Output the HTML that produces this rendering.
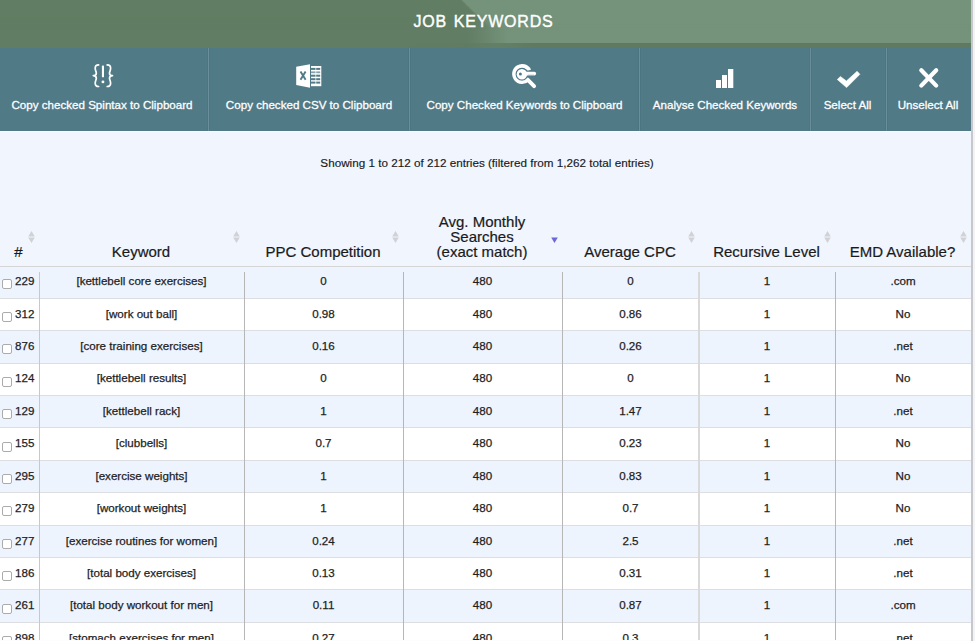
<!DOCTYPE html><html><head><meta charset='utf-8'><style>
*{margin:0;padding:0;box-sizing:border-box}
html,body{width:975px;height:641px;overflow:hidden;background:#f0f5fe;font-family:"Liberation Sans",sans-serif}
.abs{position:absolute}
#hdr{position:absolute;left:0;top:0;width:971px;height:48px;
 background:linear-gradient(90deg,#617d63 467px,#74937a 508px);}
#hdr2{position:absolute;left:0;top:0;width:971px;height:48px;
 background:linear-gradient(45deg,#617d63 49.85%,#74937a 50.15%);
 -webkit-mask-image:linear-gradient(to bottom,#000 0px,#000 13px,transparent 30px);}
#band{position:absolute;left:0;top:43px;width:971px;height:5px;background:linear-gradient(90deg,rgba(95,122,97,0) 0%,rgba(95,122,97,0) 40%,#5f7a61 55%,#5f7a61 100%)}
#title{position:absolute;left:-2px;width:971px;top:11.6px;text-align:center;color:#fff;font-size:16px;-webkit-text-stroke:0.4px #fff;letter-spacing:0.78px;word-spacing:1.6px;line-height:20px;white-space:nowrap}
#tb{position:absolute;left:0;top:48px;width:971px;height:83px;background:#517a87}
.sep{position:absolute;top:48px;height:83px;width:1px;background:#6a8f9a;box-shadow:-1px 0 0 #4c7582,1px 0 0 #4c7582}
.bt{position:absolute;top:97px;height:16px;line-height:16px;color:#fff;-webkit-text-stroke:0.28px #fff;font-size:11.6px;text-align:center;white-space:nowrap}
.ic{position:absolute;top:48px}
#right{position:absolute;left:971px;top:0;width:4px;height:641px;background:#f3f3f3;border-left:2px solid #c6c8cd}
#topline{position:absolute;left:0;top:131px;width:971px;height:1px;background:#fafcff}
#show{position:absolute;left:1.5px;width:971px;top:155px;text-align:center;font-size:11.7px;line-height:16px;color:#1a1a1a;-webkit-text-stroke:0.15px #1a1a1a}
.th{position:absolute;color:#1a1a1a;-webkit-text-stroke:0.2px #1a1a1a;font-size:15px;line-height:15px;text-align:center;white-space:nowrap}
.arr{position:absolute;top:231px;width:7px;height:12px}
#hline{position:absolute;left:0;top:266px;width:971px;height:1px;background:#d6d6d6}
.row{position:absolute;left:0;width:971px}
.rl{position:absolute;left:0;width:971px;height:1px;background:#dcdee2}
.vl{position:absolute;top:272px;width:1px;height:369px;background:#b6b6b6}
.td{position:absolute;font-size:11.6px;line-height:14px;color:#1e1e1e;-webkit-text-stroke:0.25px #1e1e1e;text-align:center;white-space:nowrap}
.cb{position:absolute;left:2px;width:10px;height:10px;border:1px solid #ababab;border-radius:2px;background:#fff}
</style></head><body>
<div id='hdr'></div><div id='hdr2'></div><div id='band'></div><div id='title'>JOB KEYWORDS</div>
<div id='tb'></div>
<div class='sep' style='left:208px'></div>
<div class='sep' style='left:409px'></div>
<div class='sep' style='left:639px'></div>
<div class='sep' style='left:810px'></div>
<div class='sep' style='left:886px'></div>
<div class='bt' style='left:-2px;width:208px'>Copy checked Spintax to Clipboard</div>
<div class='bt' style='left:209px;width:200px'>Copy checked CSV to Clipboard</div>
<div class='bt' style='left:410px;width:229px'>Copy Checked Keywords to Clipboard</div>
<div class='bt' style='left:640px;width:170px'>Analyse Checked Keywords</div>
<div class='bt' style='left:810px;width:75px'>Select All</div>
<div class='bt' style='left:886px;width:84px'>Unselect All</div>
<svg class='abs' style='left:0;top:0' width='975' height='135' viewBox='0 0 975 135'>
<g fill='none' stroke='#fff' stroke-width='1.7' stroke-linecap='round' stroke-linejoin='round'>
<path d='M98.6,64.9 C96.2,64.9 95.2,66 95.2,68.2 C95.2,70.4 96.3,71.6 96.3,73.2 C96.3,74.8 95.2,75.6 93.3,75.7 C95.2,75.8 96.3,76.6 96.3,78.2 C96.3,79.8 95.2,81 95.2,83.2 C95.2,85.4 96.2,86.5 98.6,86.5'/>
<path d='M107.2,64.9 C109.6,64.9 110.6,66 110.6,68.2 C110.6,70.4 109.5,71.6 109.5,73.2 C109.5,74.8 110.6,75.6 112.5,75.7 C110.6,75.8 109.5,76.6 109.5,78.2 C109.5,79.8 110.6,81 110.6,83.2 C110.6,85.4 109.6,86.5 107.2,86.5'/>
</g>
<g fill='#fff'>
<rect x='101.9' y='65.6' width='2.1' height='11.7' rx='0.6'/>
<circle cx='102.95' cy='81.9' r='1.45'/>
</g>
<g>
<path fill='#fff' d='M296.2,66.7 L310,64.2 L310,87.7 L296.2,85 Z'/>
<path d='M300.5,71.6 L305.6,79.8 M305.6,71.6 L300.5,79.8' stroke='#517a87' stroke-width='1.9' stroke-linecap='butt'/>
<rect x='311' y='66' width='10.3' height='20.2' fill='#fff'/>
<g fill='#517a87'>
<rect x='311' y='67.9' width='4.5' height='2'/><rect x='316.2' y='67.9' width='4' height='2'/>
<rect x='311' y='71.4' width='4.5' height='1.8' opacity='0.7'/><rect x='316.2' y='71.4' width='4' height='1.8' opacity='0.7'/>
<rect x='311' y='74.7' width='4.5' height='2'/><rect x='316.2' y='74.7' width='4' height='2'/>
<rect x='311' y='78.2' width='4.5' height='2'/><rect x='316.2' y='78.2' width='4' height='2'/>
<rect x='311' y='81.6' width='4.5' height='2'/><rect x='316.2' y='81.6' width='4' height='2'/>
</g>
<rect x='310' y='64' width='1' height='24' fill='#517a87'/>
</g>
<g>
<path d='M529.4,70.3 A8.15,8.15 0 1 0 527.8,79.8' fill='none' stroke='#fff' stroke-width='3.7'/>
<path d='M527.6,79.6 L534.1,86.1' stroke='#fff' stroke-width='3.9' stroke-linecap='round'/>
<g fill='#517a87' stroke='#517a87' stroke-width='2.2' stroke-linejoin='round'>
<circle cx='521.9' cy='74.2' r='5.2'/>
<path d='M525,71.7 L534.3,71.7 Q536.1,71.7 536.1,73.55 Q536.1,75.4 534.3,75.4 L525,75.4 Z'/>
</g>
<g fill='#fff'>
<circle cx='521.9' cy='74.2' r='5.2'/>
<path d='M525,71.7 L534.3,71.7 Q536.1,71.7 536.1,73.55 Q536.1,75.4 534.3,75.4 L525,75.4 Z'/>
</g>
<circle cx='520.4' cy='73.9' r='1.5' fill='#517a87'/>
<g fill='#517a87'><rect x='528.6' y='74.6' width='0.8' height='0.9'/><rect x='530.6' y='74.6' width='0.8' height='0.9'/><rect x='532.6' y='74.6' width='0.8' height='0.9'/></g>
</g>
<g fill='#fff'>
<rect x='716' y='80' width='5' height='8'/>
<rect x='722' y='75' width='5' height='13'/>
<rect x='728' y='69' width='5.3' height='19'/>
</g>
<path fill='#fff' stroke='#fff' stroke-width='0.6' stroke-linejoin='round' d='M837.3,79.5 L840.4,76.5 L846.4,81 L857.1,71.3 L859.9,74.3 L846.6,87.6 Z'/>
<g stroke='#fff' stroke-width='4.2' stroke-linecap='round'>
<path d='M921.3,70.3 L936.2,85.6'/><path d='M936.2,70.3 L921.3,85.6'/>
</g>
</svg>
<div id='topline'></div>
<div id='show'>Showing 1 to 212 of 212 entries (filtered from 1,262 total entries)</div>
<div class='th' style='left:-1px;width:39px;top:243.5px'>#</div>
<svg class='arr' style='left:27.6px' viewBox='0 0 7 12'><path d='M3.5,0 L6.8,5.5 L0.2,5.5 Z M0.2,6.5 L6.8,6.5 L3.5,12 Z' fill='#d0d2d6'/></svg>
<div class='th' style='left:39px;width:204px;top:243.5px'>Keyword</div>
<svg class='arr' style='left:232.6px' viewBox='0 0 7 12'><path d='M3.5,0 L6.8,5.5 L0.2,5.5 Z M0.2,6.5 L6.8,6.5 L3.5,12 Z' fill='#d0d2d6'/></svg>
<div class='th' style='left:244px;width:158px;top:243.5px'>PPC Competition</div>
<svg class='arr' style='left:391.6px' viewBox='0 0 7 12'><path d='M3.5,0 L6.8,5.5 L0.2,5.5 Z M0.2,6.5 L6.8,6.5 L3.5,12 Z' fill='#d0d2d6'/></svg>
<div class='th' style='left:403px;width:158px;top:213.5px'>Avg. Monthly<br>Searches<br>(exact match)</div>
<svg class='arr' style='left:550.6px' viewBox='0 0 7 12'><path d='M0.2,6.5 L6.8,6.5 L3.5,12 Z' fill='#6b67d6'/></svg>
<div class='th' style='left:562px;width:136px;top:243.5px'>Average CPC</div>
<svg class='arr' style='left:687.6px' viewBox='0 0 7 12'><path d='M3.5,0 L6.8,5.5 L0.2,5.5 Z M0.2,6.5 L6.8,6.5 L3.5,12 Z' fill='#d0d2d6'/></svg>
<div class='th' style='left:699px;width:135px;top:243.5px'>Recursive Level</div>
<svg class='arr' style='left:823.6px' viewBox='0 0 7 12'><path d='M3.5,0 L6.8,5.5 L0.2,5.5 Z M0.2,6.5 L6.8,6.5 L3.5,12 Z' fill='#d0d2d6'/></svg>
<div class='th' style='left:835px;width:135px;top:243.5px'>EMD Available?</div>
<svg class='arr' style='left:959.6px' viewBox='0 0 7 12'><path d='M3.5,0 L6.8,5.5 L0.2,5.5 Z M0.2,6.5 L6.8,6.5 L3.5,12 Z' fill='#d0d2d6'/></svg>
<div id='hline'></div>
<div class='row' style='top:267px;height:31px;background:#eef4fe'></div>
<div class='rl' style='top:298px'></div>
<div class='row' style='top:299px;height:31px;background:#ffffff'></div>
<div class='rl' style='top:330px'></div>
<div class='row' style='top:331px;height:32px;background:#eef4fe'></div>
<div class='rl' style='top:363px'></div>
<div class='row' style='top:364px;height:31px;background:#ffffff'></div>
<div class='rl' style='top:395px'></div>
<div class='row' style='top:396px;height:31px;background:#eef4fe'></div>
<div class='rl' style='top:427px'></div>
<div class='row' style='top:428px;height:32px;background:#ffffff'></div>
<div class='rl' style='top:460px'></div>
<div class='row' style='top:461px;height:31px;background:#eef4fe'></div>
<div class='rl' style='top:492px'></div>
<div class='row' style='top:493px;height:32px;background:#ffffff'></div>
<div class='rl' style='top:525px'></div>
<div class='row' style='top:526px;height:31px;background:#eef4fe'></div>
<div class='rl' style='top:557px'></div>
<div class='row' style='top:558px;height:31px;background:#ffffff'></div>
<div class='rl' style='top:589px'></div>
<div class='row' style='top:590px;height:32px;background:#eef4fe'></div>
<div class='rl' style='top:622px'></div>
<div class='row' style='top:623px;height:31px;background:#ffffff'></div>
<div class='rl' style='top:654px'></div>
<div class='vl' style='left:39px;background:#c8c8c8'></div>
<div class='vl' style='left:244px'></div>
<div class='vl' style='left:403px'></div>
<div class='vl' style='left:562px'></div>
<div class='vl' style='left:698px;width:2px;background:#d9d9d9'></div>
<div class='vl' style='left:835px'></div>
<div class='cb' style='top:279.4px'></div>
<div class='td' style='left:15px;top:274.21px;text-align:left'>229</div>
<div class='td' style='left:40px;width:203px;top:274.21px'>[kettlebell core exercises]</div>
<div class='td' style='left:245px;width:157px;top:274.21px'>0</div>
<div class='td' style='left:404px;width:157px;top:274.21px'>480</div>
<div class='td' style='left:563px;width:135px;top:274.21px'>0</div>
<div class='td' style='left:700px;width:134px;top:274.21px'>1</div>
<div class='td' style='left:836px;width:134px;top:274.21px'>.com</div>
<div class='cb' style='top:311.8px'></div>
<div class='td' style='left:15px;top:306.63px;text-align:left'>312</div>
<div class='td' style='left:40px;width:203px;top:306.63px'>[work out ball]</div>
<div class='td' style='left:245px;width:157px;top:306.63px'>0.98</div>
<div class='td' style='left:404px;width:157px;top:306.63px'>480</div>
<div class='td' style='left:563px;width:135px;top:306.63px'>0.86</div>
<div class='td' style='left:700px;width:134px;top:306.63px'>1</div>
<div class='td' style='left:836px;width:134px;top:306.63px'>No</div>
<div class='cb' style='top:344.2px'></div>
<div class='td' style='left:15px;top:339.05px;text-align:left'>876</div>
<div class='td' style='left:40px;width:203px;top:339.05px'>[core training exercises]</div>
<div class='td' style='left:245px;width:157px;top:339.05px'>0.16</div>
<div class='td' style='left:404px;width:157px;top:339.05px'>480</div>
<div class='td' style='left:563px;width:135px;top:339.05px'>0.26</div>
<div class='td' style='left:700px;width:134px;top:339.05px'>1</div>
<div class='td' style='left:836px;width:134px;top:339.05px'>.net</div>
<div class='cb' style='top:376.7px'></div>
<div class='td' style='left:15px;top:371.47px;text-align:left'>124</div>
<div class='td' style='left:40px;width:203px;top:371.47px'>[kettlebell results]</div>
<div class='td' style='left:245px;width:157px;top:371.47px'>0</div>
<div class='td' style='left:404px;width:157px;top:371.47px'>480</div>
<div class='td' style='left:563px;width:135px;top:371.47px'>0</div>
<div class='td' style='left:700px;width:134px;top:371.47px'>1</div>
<div class='td' style='left:836px;width:134px;top:371.47px'>No</div>
<div class='cb' style='top:409.1px'></div>
<div class='td' style='left:15px;top:403.89px;text-align:left'>129</div>
<div class='td' style='left:40px;width:203px;top:403.89px'>[kettlebell rack]</div>
<div class='td' style='left:245px;width:157px;top:403.89px'>1</div>
<div class='td' style='left:404px;width:157px;top:403.89px'>480</div>
<div class='td' style='left:563px;width:135px;top:403.89px'>1.47</div>
<div class='td' style='left:700px;width:134px;top:403.89px'>1</div>
<div class='td' style='left:836px;width:134px;top:403.89px'>.net</div>
<div class='cb' style='top:441.5px'></div>
<div class='td' style='left:15px;top:436.31px;text-align:left'>155</div>
<div class='td' style='left:40px;width:203px;top:436.31px'>[clubbells]</div>
<div class='td' style='left:245px;width:157px;top:436.31px'>0.7</div>
<div class='td' style='left:404px;width:157px;top:436.31px'>480</div>
<div class='td' style='left:563px;width:135px;top:436.31px'>0.23</div>
<div class='td' style='left:700px;width:134px;top:436.31px'>1</div>
<div class='td' style='left:836px;width:134px;top:436.31px'>No</div>
<div class='cb' style='top:473.9px'></div>
<div class='td' style='left:15px;top:468.73px;text-align:left'>295</div>
<div class='td' style='left:40px;width:203px;top:468.73px'>[exercise weights]</div>
<div class='td' style='left:245px;width:157px;top:468.73px'>1</div>
<div class='td' style='left:404px;width:157px;top:468.73px'>480</div>
<div class='td' style='left:563px;width:135px;top:468.73px'>0.83</div>
<div class='td' style='left:700px;width:134px;top:468.73px'>1</div>
<div class='td' style='left:836px;width:134px;top:468.73px'>No</div>
<div class='cb' style='top:506.3px'></div>
<div class='td' style='left:15px;top:501.15px;text-align:left'>279</div>
<div class='td' style='left:40px;width:203px;top:501.15px'>[workout weights]</div>
<div class='td' style='left:245px;width:157px;top:501.15px'>1</div>
<div class='td' style='left:404px;width:157px;top:501.15px'>480</div>
<div class='td' style='left:563px;width:135px;top:501.15px'>0.7</div>
<div class='td' style='left:700px;width:134px;top:501.15px'>1</div>
<div class='td' style='left:836px;width:134px;top:501.15px'>No</div>
<div class='cb' style='top:538.8px'></div>
<div class='td' style='left:15px;top:533.57px;text-align:left'>277</div>
<div class='td' style='left:40px;width:203px;top:533.57px'>[exercise routines for women]</div>
<div class='td' style='left:245px;width:157px;top:533.57px'>0.24</div>
<div class='td' style='left:404px;width:157px;top:533.57px'>480</div>
<div class='td' style='left:563px;width:135px;top:533.57px'>2.5</div>
<div class='td' style='left:700px;width:134px;top:533.57px'>1</div>
<div class='td' style='left:836px;width:134px;top:533.57px'>.net</div>
<div class='cb' style='top:571.2px'></div>
<div class='td' style='left:15px;top:565.99px;text-align:left'>186</div>
<div class='td' style='left:40px;width:203px;top:565.99px'>[total body exercises]</div>
<div class='td' style='left:245px;width:157px;top:565.99px'>0.13</div>
<div class='td' style='left:404px;width:157px;top:565.99px'>480</div>
<div class='td' style='left:563px;width:135px;top:565.99px'>0.31</div>
<div class='td' style='left:700px;width:134px;top:565.99px'>1</div>
<div class='td' style='left:836px;width:134px;top:565.99px'>.net</div>
<div class='cb' style='top:603.6px'></div>
<div class='td' style='left:15px;top:598.41px;text-align:left'>261</div>
<div class='td' style='left:40px;width:203px;top:598.41px'>[total body workout for men]</div>
<div class='td' style='left:245px;width:157px;top:598.41px'>0.11</div>
<div class='td' style='left:404px;width:157px;top:598.41px'>480</div>
<div class='td' style='left:563px;width:135px;top:598.41px'>0.87</div>
<div class='td' style='left:700px;width:134px;top:598.41px'>1</div>
<div class='td' style='left:836px;width:134px;top:598.41px'>.com</div>
<div class='cb' style='top:636.0px'></div>
<div class='td' style='left:15px;top:630.83px;text-align:left'>898</div>
<div class='td' style='left:40px;width:203px;top:630.83px'>[stomach exercises for men]</div>
<div class='td' style='left:245px;width:157px;top:630.83px'>0.27</div>
<div class='td' style='left:404px;width:157px;top:630.83px'>480</div>
<div class='td' style='left:563px;width:135px;top:630.83px'>0.3</div>
<div class='td' style='left:700px;width:134px;top:630.83px'>1</div>
<div class='td' style='left:836px;width:134px;top:630.83px'>.net</div>
<div class='abs' style='left:0;top:640px;width:971px;height:1px;background:#fdfdfd'></div>
<div id='right'></div>
</body></html>
